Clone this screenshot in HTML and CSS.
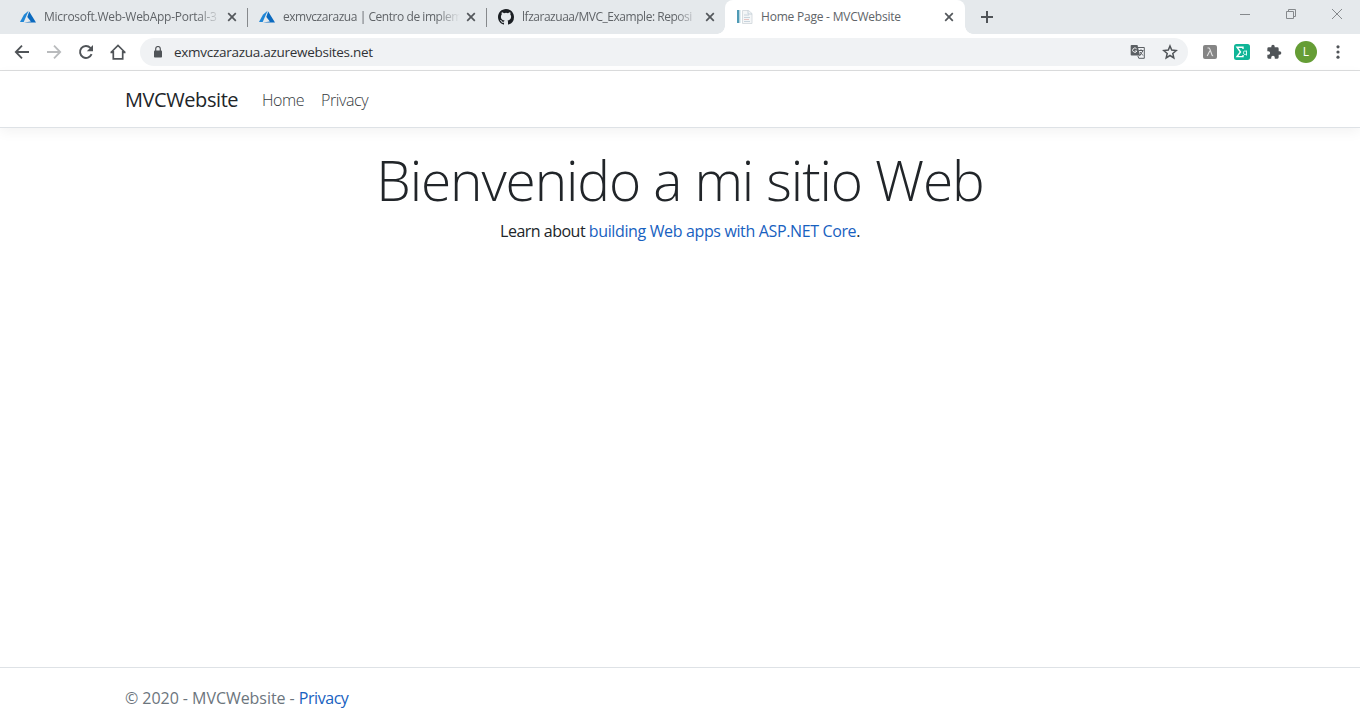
FILE: index.html
```html
<!DOCTYPE html>
<html lang="es">
<head>
<meta charset="utf-8">
<title>Home Page - MVCWebsite</title>
<link rel="stylesheet" href="styles.css">
</head>
<body>
<svg class="defs" aria-hidden="true">
  <symbol id="azure" viewBox="0 0 16 14"><path fill="#1f86d6" d="M8.6.7 3.9 4.8 0 12h3.7z"/><path fill="#0b6abf" d="M9.2 1.6 7.3 7.1l3.6 4.3L4 12.6h12z"/></symbol>
  <symbol id="close" viewBox="0 0 10 10"><path d="M1.2 1.2l7.6 7.6M8.8 1.2 1.2 8.8" fill="none" stroke="#53575b" stroke-width="1.7"/></symbol>
</svg>
<div class="tabstrip">
  <div class="tab first"><svg class="fav"><use href="#azure"/></svg><span class="title t1">Microsoft.Web-WebApp-Portal-3</span><svg class="x"><use href="#close"/></svg></div>
  <div class="tab second"><svg class="fav"><use href="#azure"/></svg><span class="title t2">exmvczarazua | Centro de implem</span><svg class="x"><use href="#close"/></svg></div>
  <div class="tab third"><svg class="gh" viewBox="0 0 16 16"><path fill="#1b1f23" d="M8 0C3.58 0 0 3.58 0 8c0 3.54 2.29 6.53 5.47 7.59.4.07.55-.17.55-.38 0-.19-.01-.82-.01-1.49-2.01.37-2.53-.49-2.69-.94-.09-.23-.48-.94-.82-1.13-.28-.15-.68-.52-.01-.53.63-.01 1.08.58 1.23.82.72 1.21 1.87.87 2.33.66.07-.52.28-.87.51-1.07-1.78-.2-3.64-.89-3.64-3.95 0-.87.31-1.59.82-2.15-.08-.2-.36-1.02.08-2.12 0 0 .67-.21 2.2.82a7.5 7.5 0 0 1 4 0c1.53-1.04 2.2-.82 2.2-.82.44 1.1.16 1.92.08 2.12.51.56.82 1.27.82 2.15 0 3.07-1.87 3.75-3.65 3.95.29.25.54.73.54 1.48 0 1.07-.01 1.93-.01 2.2 0 .21.15.46.55.38A8.01 8.01 0 0 0 16 8c0-4.42-3.58-8-8-8z"/></svg><span class="title t3">lfzarazuaa/MVC_Example: Reposi</span><svg class="x"><use href="#close"/></svg></div>
  <div class="tab active"><svg class="page" viewBox="0 0 16 16"><path fill="#4f9ab5" d="M0 1h2.500v13H0z"/><path fill="#c3dde6" d="M2.500 1h1v13h-1z"/><path fill="#f4f6f7" stroke="#cfd6db" stroke-width=".8" d="M5.500 1.500h6l3.500 3v10H5.500z"/><path fill="none" stroke="#bccbd5" stroke-width=".8" d="M11 1.500v3.500h4M7 6h5M7 8.500h6M7 12.500h6"/><path stroke="#e3b9b5" stroke-width=".8" d="M7 10.500h5"/></svg><span class="title t4">Home Page - MVCWebsite</span><svg class="x"><use href="#close"/></svg></div>
  <svg class="plus" viewBox="0 0 14 14"><path d="M7 1v12M1 7h12" stroke="#505458" stroke-width="2"/></svg>
  <div class="window">
    <svg viewBox="0 0 12 12"><path d="M1 6.500h10" stroke="#85898c"/></svg>
    <svg viewBox="0 0 12 12"><path d="M1.500 3.500h7v7h-7zM3.500 3.500v-2h7v7h-2" fill="none" stroke="#85898c"/></svg>
    <svg viewBox="0 0 12 12"><path d="M1 1l10 10M11 1 1 11" stroke="#85898c"/></svg>
  </div>
</div>
<div class="toolbar">
  <div class="nav">
    <svg viewBox="0 0 16 16"><path d="M15 8H2M8 1.700 1.800 8 8 14.300" fill="none" stroke="#505458" stroke-width="1.800"/></svg>
    <svg viewBox="0 0 16 16"><path d="M1 8h13M8 1.700 14.200 8 8 14.300" fill="none" stroke="#b9bbbd" stroke-width="1.800"/></svg>
    <svg viewBox="0 0 16 16"><path d="M13.600 10.200A6 6 0 1 1 12.400 3.800l1 1" fill="none" stroke="#505458" stroke-width="1.900"/><path fill="#505458" d="M15 1v6.200H8.800z"/></svg>
    <svg viewBox="0 0 16 16"><path d="M.9 8.500 8 1.400l7.100 7.100M3.300 7v7.800h9.400V7M.5 8.400h3M12.500 8.400h3" fill="none" stroke="#505458" stroke-width="1.700"/></svg>
  </div>
  <div class="omnibox">
    <svg class="lock" viewBox="0 0 8 12"><path fill="#505458" d="M.8 4.500h6.400q.8 0 .8.800v5.400q0 .8-.8.800H.8q-.8 0-.8-.8V5.300q0-.8.800-.8z"/><path d="M1.700 5V2.800a2.300 2.300 0 0 1 4.600 0V5" fill="none" stroke="#505458" stroke-width="1.200"/></svg>
    <span class="url">exmvczarazua.azurewebsites.net</span>
    <svg class="translate" viewBox="0 0 16 16"><path fill="#5b5f63" d="M1.500 1h6l2.500 10.500H1.500Q.7 11.500.7 10.700V1.800Q.7 1 1.500 1z"/><path d="M8 3.500h6.300v10.800H8.800l-1-2.500M8.500 6.500h5M11 5.300v1.200M9.500 12l3.300-5M10 8l3 3.500" fill="none" stroke="#5b5f63"/><path d="M6.600 4.800a2.200 2.200 0 1 0 .3 2.200H4.800" fill="none" stroke="#fff" stroke-width=".9"/></svg>
    <svg class="star" viewBox="0 0 16 16"><path d="M8 2l1.700 4.100 4.500.4-3.400 3 1 4.400L8 11.500l-3.800 2.400 1-4.400-3.400-3 4.500-.4z" fill="none" stroke="#505458" stroke-width="1.500"/></svg>
  </div>
  <div class="ext">
    <svg viewBox="0 0 16 16"><rect x="1" y="1" width="14" height="14" rx="2" fill="#858585"/><path d="M5.500 4h1.300q.7 0 1 .9L10 11q.3.900 1.200.7M7.900 6.800 5.200 12" fill="none" stroke="#e3e3e3" stroke-width="1.100"/></svg>
    <svg viewBox="0 0 16 16"><rect width="16" height="16" rx="2.500" fill="#0fb597"/><path d="M9 5V3.200H3L6.500 8 3 12.600h6V11" fill="none" stroke="#fff" stroke-width="1.400"/><path d="M12.500 6.500v5M12.500 7.500q-3-1.500-3 1.200t3 1.300" fill="none" stroke="#d9fff6"/></svg>
    <svg viewBox="0 0 24 24"><path fill="#505458" d="M20.500 11H19V7a2 2 0 0 0-2-2h-4V3.500a2.500 2.500 0 0 0-5 0V5H4a2 2 0 0 0-2 2v3.800h1.500a2.700 2.700 0 0 1 0 5.400H2V20a2 2 0 0 0 2 2h3.800v-1.500a2.700 2.700 0 0 1 5.400 0V22H17a2 2 0 0 0 2-2v-4h1.500a2.500 2.500 0 0 0 0-5z"/></svg>
    <span class="avatar">L</span>
    <svg viewBox="0 0 16 16"><g fill="#505458"><circle cx="8" cy="2.800" r="1.600"/><circle cx="8" cy="8" r="1.600"/><circle cx="8" cy="13.200" r="1.600"/></g></svg>
  </div>
</div>
<header class="navbar"><a class="brand">MVCWebsite</a><a class="link home">Home</a><a class="link privacy">Privacy</a></header>
<main>
  <h1>Bienvenido a mi sitio Web</h1>
  <p>Learn about <a>building Web apps with ASP.NET Core</a>.</p>
</main>
<footer>© 2020 - MVCWebsite - <a>Privacy</a></footer>
</body>
</html>
```
FILE: styles.css
```css
* { box-sizing: border-box; }
body { margin: 0; height: 728px; display: flex; flex-direction: column; overflow: hidden; background: #fff; color: #212529; font-family: "Open Sans", "Noto Sans", sans-serif; }
svg { display: block; flex: none; }
.defs { position: absolute; width: 0; height: 0; }
.tabstrip { height: 34px; flex: none; display: flex; background: #e5e9ec; color: #606468; font-size: 12px; }
.tab { width: 239px; height: 34px; display: flex; align-items: center; padding: 0 11px 0 11px; flex: none; position: relative; }
.first { width: 248px; padding-left: 20px; }
.first::after, .second::after { content: ""; position: absolute; right: 0; top: 8px; width: 1px; height: 19px; background: #86898c; }
.third { width: 238px; padding-right: 10px; }
.active { width: 240px; padding-left: 12px; background: #fff; border-radius: 8px 8px 0 0; }
.active::before, .active::after { content: ""; position: absolute; bottom: 0; width: 8px; height: 8px; }
.active::before { left: -8px; background: radial-gradient(circle at 0 0, transparent 7.5px, #fff 8px); }
.active::after { right: -8px; background: radial-gradient(circle at 100% 0, transparent 7.5px, #fff 8px); }
.fav { width: 16px; height: 14px; }
.gh, .page { width: 16px; height: 16px; }
.title { margin-left: 8px; flex: 1; min-width: 0; overflow: hidden; white-space: nowrap; margin-right: 8px; line-height: 20px; }
.t1 { letter-spacing: -.27px; }
.t2 { letter-spacing: -.45px; }
.t3 { letter-spacing: -.47px; }
.t4 { letter-spacing: -.22px; }
.first .title, .second .title, .third .title { margin-right: 6px; -webkit-mask-image: linear-gradient(to right, #000 calc(100% - 24px), transparent); mask-image: linear-gradient(to right, #000 calc(100% - 24px), transparent); }
.x { width: 10px; height: 10px; }
.plus { width: 14px; height: 14px; margin: 10px 0 0 15px; }
.window { display: flex; gap: 34px; margin: 8px 17px 0 auto; }
.window svg { width: 12px; height: 12px; }
.toolbar { height: 37px; flex: none; display: flex; align-items: center; border-bottom: 1px solid #dcddde; padding: 0 14px; }
.nav { display: flex; gap: 16px; }
.nav svg { width: 16px; height: 16px; }
.omnibox { width: 1048px; height: 28px; margin-left: 14px; border-radius: 14px; background: #f0f2f4; display: flex; align-items: center; padding: 0 10px 0 14px; }
.lock { width: 8px; height: 12px; }
.url { margin-left: 12px; font-size: 13.5px; letter-spacing: -.28px; flex: 1; color: #303236; }
.translate, .star { width: 16px; height: 16px; }
.star { margin-left: 16px; }
.ext { display: flex; align-items: center; margin-left: 14px; gap: 16px; }
.ext svg { width: 16px; height: 16px; }
.avatar { width: 22px; height: 22px; margin: 0 -3px; border-radius: 50%; background: #659d35; color: #fff; text-align: center; font: 12px/22px "Open Sans", sans-serif; }
.navbar { height: 57px; flex: none; display: flex; align-items: center; padding: 1px 125px 0; border-bottom: 1px solid #dee2e6; box-shadow: 0 4px 12px rgba(0,0,0,.05); }
.brand { font-size: 20px; width: 137px; white-space: nowrap; letter-spacing: -.42px; font-weight: 370; }
.link { font-size: 16px; color: #343a40; white-space: nowrap; letter-spacing: -.4px; font-weight: 350; }
.home { width: 59px; }
main { flex: 1; text-align: center; padding-top: 18px; }
h1 { margin: 0; font-size: 55px; font-weight: 300; line-height: 67px; white-space: nowrap; letter-spacing: -1.12px; }
p { margin: 6px 0 0; font-size: 16px; line-height: 24px; letter-spacing: -.5px; font-weight: 380; }
p a { letter-spacing: -.36px; }
p a, footer a { color: #1861bf; }
footer { height: 61px; flex: none; border-top: 1px solid #dee2e6; padding: 0 125px; font-size: 16px; line-height: 61px; color: #6c757d; white-space: nowrap; letter-spacing: -.05px; font-weight: 370; }
footer a { letter-spacing: -.45px; }
```
